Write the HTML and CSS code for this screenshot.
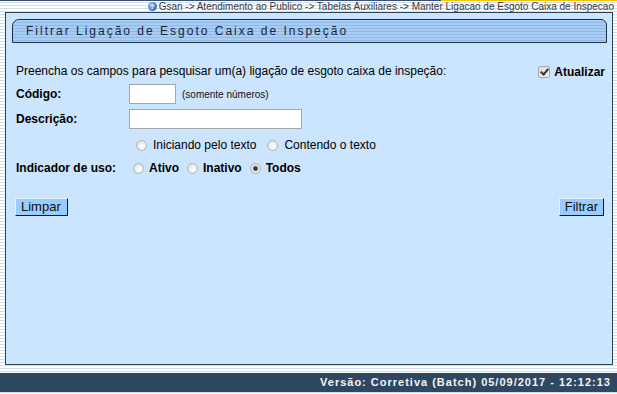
FILE: index.html
```html
<!DOCTYPE html>
<html lang="pt">
<head>
<meta charset="utf-8">
<title>Filtrar Ligação de Esgoto Caixa de Inspeção</title>
<link rel="stylesheet" href="styles.css">
</head>
<body>
<div class="topline"></div>
<div class="crumb">
  <span class="help">?</span>
  <span class="crumb-text">Gsan -&gt; Atendimento ao Publico -&gt; Tabelas Auxiliares -&gt; Manter Ligacao de Esgoto Caixa de Inspecao</span>
</div>
<div class="panel">
  <div class="titlebar">Filtrar Ligação de Esgoto Caixa de Inspeção</div>
  <div class="form">
    <div class="row intro">
      <span class="intro-text">Preencha os campos para pesquisar um(a) ligação de esgoto caixa de inspeção:</span>
      <label class="atualizar"><input type="checkbox" class="chk" checked><span>Atualizar</span></label>
    </div>
    <div class="row field">
      <span class="label">Código:</span>
      <input type="text" class="txt codigo">
      <span class="hint">(somente números)</span>
    </div>
    <div class="row field desc">
      <span class="label">Descrição:</span>
      <input type="text" class="txt descricao">
    </div>
    <div class="row opts">
      <span class="label"></span>
      <label class="opt"><input type="radio" name="tipo" class="rad"><span>Iniciando pelo texto</span></label>
      <label class="opt"><input type="radio" name="tipo" class="rad"><span>Contendo o texto</span></label>
    </div>
    <div class="row uso">
      <span class="label">Indicador de uso:</span>
      <label class="opt b"><input type="radio" name="uso" class="rad"><span>Ativo</span></label>
      <label class="opt b"><input type="radio" name="uso" class="rad"><span>Inativo</span></label>
      <label class="opt b"><input type="radio" name="uso" class="rad" checked><span>Todos</span></label>
    </div>
    <div class="row buttons">
      <button class="btn">Limpar</button>
      <button class="btn">Filtrar</button>
    </div>
  </div>
</div>
<div class="spacer"></div>
<div class="footer">Versão: Corretiva (Batch) 05/09/2017 - 12:12:13</div>
</body>
</html>
```
FILE: styles.css
```css
html, body {
  margin: 0;
  padding: 0;
}
body {
  width: 617px;
  height: 394px;
  overflow: hidden;
  font-family: "Liberation Sans", Arial, sans-serif;
  font-size: 12px;
  color: #000;
  background: repeating-linear-gradient(to bottom, #ffffff 0 2px, #cfdff0 2px 3px);
}
.topline {
  height: 1px;
  background: linear-gradient(to right, #3b5068 0 71.5%, #f2c200 71.5% 100%);
}
.crumb {
  height: 11px;
  display: flex;
  justify-content: flex-end;
  align-items: center;
  padding-right: 3px;
  font-size: 10px;
  line-height: 11px;
  color: #3a3a3a;
}
.help {
  width: 9px;
  height: 9px;
  border-radius: 50%;
  background: radial-gradient(circle at 35% 35%, #9cc3f2, #2f6cc0 70%);
  color: #fff;
  font-size: 7px;
  font-weight: bold;
  line-height: 9px;
  text-align: center;
  margin-right: 2px;
}
.panel {
  box-sizing: border-box;
  height: 353px;
  margin: 0 4px 0 5px;
  border: 1px solid #2c4257;
  background: #cce5fe;
  display: flex;
  flex-direction: column;
}
.titlebar {
  box-sizing: border-box;
  height: 24px;
  margin: 6px 5px 0 6px;
  border: 1px solid #1f2f44;
  border-radius: 7px 6px 0 0;
  background: repeating-linear-gradient(to bottom, #a8ccf2 0 2px, #8fb9e8 2px 3px);
  padding-left: 13px;
  font-size: 12px;
  letter-spacing: 2px;
  line-height: 22px;
  color: #16243e;
}
.form {
  display: flex;
  flex-direction: column;
  padding: 18px 7px 0 10px;
}
.row {
  display: flex;
  align-items: center;
}
.intro {
  height: 20px;
  justify-content: space-between;
}
.atualizar {
  display: flex;
  align-items: center;
  gap: 4px;
  font-weight: bold;
  margin-top: 2px;
}
.field {
  height: 20px;
  margin-top: 3px;
}
.desc {
  margin-top: 5px;
}
.label {
  width: 113px;
  flex: none;
  font-weight: bold;
}
.txt {
  box-sizing: border-box;
  height: 20px;
  margin: 0;
  border: 1px solid #a6a6a6;
  background: #fff;
  padding: 0 2px;
  font: inherit;
}
.codigo {
  width: 47px;
}
.descricao {
  width: 173px;
}
.hint {
  font-size: 10px;
  margin-left: 6px;
  color: #111;
}
.opts {
  height: 16px;
  margin-top: 8px;
}
.uso {
  height: 16px;
  margin-top: 7px;
}
.opt {
  display: flex;
  align-items: center;
  gap: 6px;
}
.opts .opt:first-of-type {
  margin-left: 7px;
}
.opts .opt + .opt {
  margin-left: 11px;
}
.uso .opt {
  gap: 5px;
}
.uso .opt:first-of-type {
  margin-left: 4px;
}
.uso .opt + .opt {
  margin-left: 8px;
}
.b {
  font-weight: bold;
}
.rad {
  appearance: none;
  -webkit-appearance: none;
  width: 11px;
  height: 11px;
  margin: 0;
  border-radius: 50%;
  border: 1px solid #b3b3b3;
  background: radial-gradient(circle at 60% 60%, #ffffff 0, #f1f1f1 40%, #d2d2d2 100%);
  box-sizing: border-box;
  flex: none;
}
.rad:checked {
  background: radial-gradient(circle, #3a3a3a 0 1.8px, #9a9a9a 2.4px, #e8e8e8 3px, #d5d5d5 100%);
}
.chk {
  appearance: none;
  -webkit-appearance: none;
  width: 12px;
  height: 12px;
  margin: 0;
  border: 1px solid #a8a8a8;
  border-radius: 2px;
  box-sizing: border-box;
  background: linear-gradient(135deg, #d8d8d8, #f4f4f4);
  position: relative;
}
.chk:checked::after {
  content: "";
  position: absolute;
  left: 3px;
  top: 0px;
  width: 3px;
  height: 6px;
  border: solid #333;
  border-width: 0 2px 2px 0;
  transform: rotate(40deg);
}
.buttons {
  justify-content: space-between;
  margin-top: 22px;
}
.btn {
  box-sizing: border-box;
  height: 18px;
  margin: 0;
  padding: 0 5px;
  background: #99ccff;
  border: 1px solid;
  border-color: #e8f3ff #101828 #101828 #e8f3ff;
  font-family: "Liberation Sans", Arial, sans-serif;
  font-size: 13px;
  line-height: 16px;
  color: #101010;
  border-radius: 0;
}
.buttons .btn:first-child {
  margin-left: -1px;
  padding: 0 6px 0 5px;
}
.buttons .btn:last-child {
  margin-right: 1px;
}
.spacer {
  height: 8px;
}
.footer {
  box-sizing: border-box;
  height: 19px;
  background: #2f4862;
  color: #f4f4f4;
  font-size: 11px;
  font-weight: bold;
  letter-spacing: 1px;
  line-height: 19px;
  text-align: right;
  padding-right: 6px;
}
```
